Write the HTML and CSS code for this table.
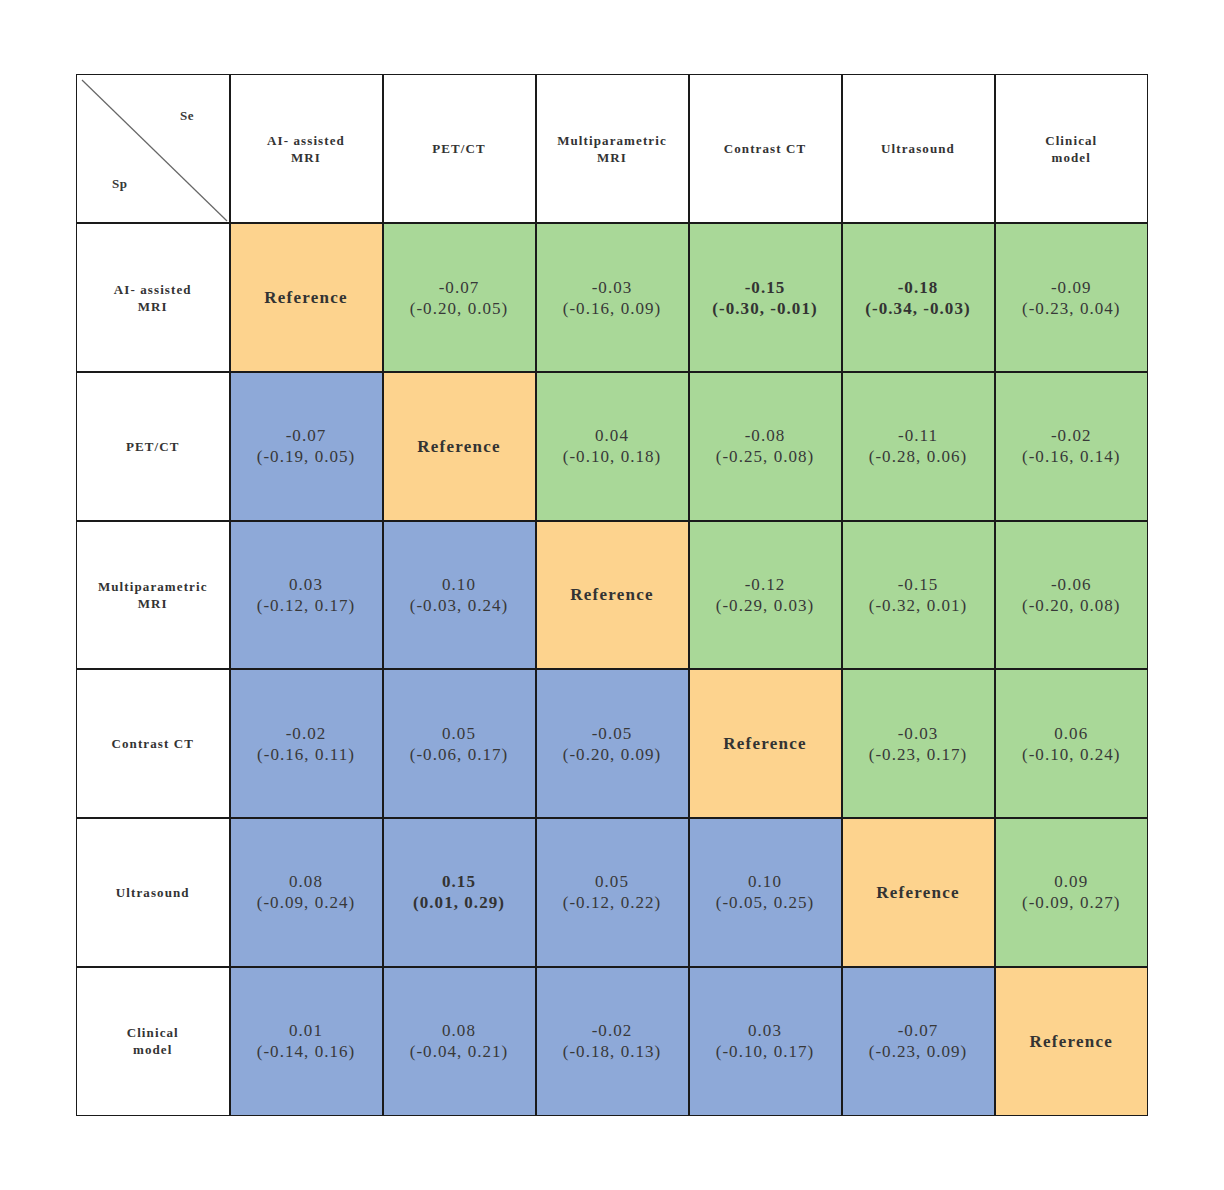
FILE: index.html
```html
<!DOCTYPE html>
<html>
<head>
<meta charset="utf-8">
<link rel="stylesheet" href="styles.css">
</head>
<body>
<table class="matrix">
  <tr>
    <td class="corner">
      <svg class="diag" width="153" height="148" viewBox="0 0 153 148"><line x1="5" y1="5" x2="150" y2="146" stroke="#666" stroke-width="1.2"/></svg>
      <span class="se">Se</span>
      <span class="sp">Sp</span>
    </td>
    <td class="head">AI- assisted<br>MRI</td>
    <td class="head">PET/CT</td>
    <td class="head">Multiparametric<br>MRI</td>
    <td class="head">Contrast CT</td>
    <td class="head">Ultrasound</td>
    <td class="head">Clinical<br>model</td>
  </tr>
  <tr>
    <td class="head">AI- assisted<br>MRI</td>
    <td class="ref">Reference</td>
    <td class="g">-0.07<br>(-0.20, 0.05)</td>
    <td class="g">-0.03<br>(-0.16, 0.09)</td>
    <td class="g b">-0.15<br>(-0.30, -0.01)</td>
    <td class="g b">-0.18<br>(-0.34, -0.03)</td>
    <td class="g">-0.09<br>(-0.23, 0.04)</td>
  </tr>
  <tr>
    <td class="head">PET/CT</td>
    <td class="bl">-0.07<br>(-0.19, 0.05)</td>
    <td class="ref">Reference</td>
    <td class="g">0.04<br>(-0.10, 0.18)</td>
    <td class="g">-0.08<br>(-0.25, 0.08)</td>
    <td class="g">-0.11<br>(-0.28, 0.06)</td>
    <td class="g">-0.02<br>(-0.16, 0.14)</td>
  </tr>
  <tr>
    <td class="head">Multiparametric<br>MRI</td>
    <td class="bl">0.03<br>(-0.12, 0.17)</td>
    <td class="bl">0.10<br>(-0.03, 0.24)</td>
    <td class="ref">Reference</td>
    <td class="g">-0.12<br>(-0.29, 0.03)</td>
    <td class="g">-0.15<br>(-0.32, 0.01)</td>
    <td class="g">-0.06<br>(-0.20, 0.08)</td>
  </tr>
  <tr>
    <td class="head">Contrast CT</td>
    <td class="bl">-0.02<br>(-0.16, 0.11)</td>
    <td class="bl">0.05<br>(-0.06, 0.17)</td>
    <td class="bl">-0.05<br>(-0.20, 0.09)</td>
    <td class="ref">Reference</td>
    <td class="g">-0.03<br>(-0.23, 0.17)</td>
    <td class="g">0.06<br>(-0.10, 0.24)</td>
  </tr>
  <tr>
    <td class="head">Ultrasound</td>
    <td class="bl">0.08<br>(-0.09, 0.24)</td>
    <td class="bl b">0.15<br>(0.01, 0.29)</td>
    <td class="bl">0.05<br>(-0.12, 0.22)</td>
    <td class="bl">0.10<br>(-0.05, 0.25)</td>
    <td class="ref">Reference</td>
    <td class="g">0.09<br>(-0.09, 0.27)</td>
  </tr>
  <tr>
    <td class="head">Clinical<br>model</td>
    <td class="bl">0.01<br>(-0.14, 0.16)</td>
    <td class="bl">0.08<br>(-0.04, 0.21)</td>
    <td class="bl">-0.02<br>(-0.18, 0.13)</td>
    <td class="bl">0.03<br>(-0.10, 0.17)</td>
    <td class="bl">-0.07<br>(-0.23, 0.09)</td>
    <td class="ref">Reference</td>
  </tr>
</table>
</body>
</html>
```
FILE: styles.css
```css
html, body {
  margin: 0;
  padding: 0;
  background: #fff;
}
body {
  padding: 74px 0 0 76px;
  font-family: "Liberation Serif", serif;
  color: #333;
}
.matrix {
  border-collapse: collapse;
  table-layout: fixed;
  width: 1071px;
  font-family: "Liberation Serif", serif;
}
.matrix td {
  width: 153px;
  height: 148.7px;
  padding: 0;
  border: 2px solid #1a1a1a;
  text-align: center;
  vertical-align: middle;
  font-family: "Liberation Serif", serif;
  font-size: 17px;
  line-height: 21px;
  letter-spacing: 1.05px;
  color: #383838;
  box-sizing: border-box;
}
.matrix tr:first-child td { border-top-width: 1px; }
.matrix tr:last-child td { border-bottom-width: 1px; }
.matrix td:first-child { border-left-width: 1px; }
.matrix td:last-child { border-right-width: 1px; }
.matrix td.head {
  background: #fff;
  font-weight: bold;
  font-size: 13px;
  line-height: 17px;
  letter-spacing: 1.1px;
  color: #333;
}
.matrix td.corner {
  position: relative;
  background: #fff;
}
.diag {
  position: absolute;
  left: 0;
  top: 0;
}
.se, .sp {
  position: absolute;
  font-weight: bold;
  font-size: 13px;
  line-height: 15px;
  letter-spacing: 0.5px;
}
.se { left: 103px; top: 33px; }
.sp { left: 35px; top: 101px; }
.matrix td.ref {
  background: #fdd38e;
  font-weight: bold;
  letter-spacing: 1.25px;
  color: #333;
}
.g { background: #a9d898; }
.bl { background: #8ea9d8; }
.matrix td.b { font-weight: bold; color: #333; }
```
